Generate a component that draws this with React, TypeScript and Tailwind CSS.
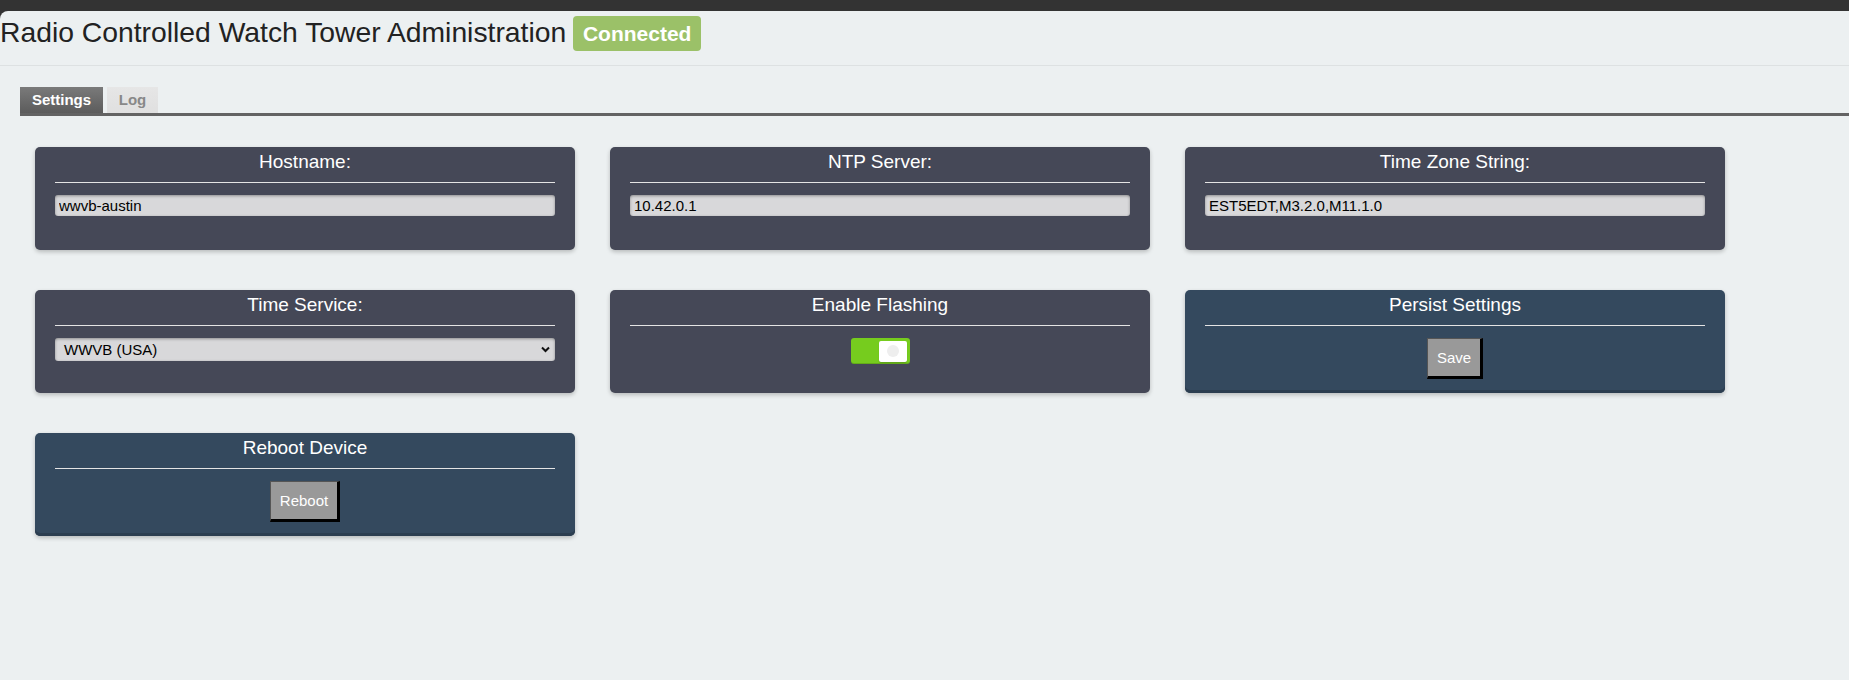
import React from "react";

const font = { fontFamily: '"Liberation Sans", Arial, Helvetica, sans-serif' };

function Card({
  title,
  blue,
  children,
}: {
  title: string;
  blue?: boolean;
  children: React.ReactNode;
}) {
  return (
    <div
      className={
        "h-[103px] w-[540px] rounded-[5px] px-[20px] pt-[4px] shadow-[0_2px_4px_rgba(0,0,0,0.22)] " +
        (blue
          ? "bg-[#34495e] shadow-[inset_0_-3px_0_#2c3e50,0_2px_4px_rgba(0,0,0,0.22)]"
          : "bg-[#454857]")
      }
    >
      <div className="text-center text-[19px] leading-[22px] text-white">{title}</div>
      <div className="mt-[9px] h-px bg-[#e4e4e4]" />
      <div className="mt-[12px]">{children}</div>
    </div>
  );
}

function TextInput({ value }: { value: string }) {
  return (
    <input
      readOnly
      value={value}
      className="block h-[21px] w-full rounded-[3px] bg-[#d8d8da] px-[4px] text-[15px] leading-[21px] text-black shadow-[inset_0_1px_3px_rgba(0,0,0,0.35)] outline-none"
      style={font}
    />
  );
}

function Button({ label }: { label: string }) {
  return (
    <div className="flex justify-center">
      <button
        className="border-l border-t border-l-[#555] border-t-[#555] border-r-[3px] border-b-[3px] border-r-black border-b-black bg-[#999999] px-[9px] py-[10px] text-[15px] leading-[17px] text-white"
        style={font}
      >
        {label}
      </button>
    </div>
  );
}

export default function App() {
  return (
    <div className="min-h-screen bg-[#333333] pt-[11px]" style={font}>
      <div className="min-h-[669px] rounded-tl-[8px] bg-[#ecf0f1]">
        <div className="flex h-[55px] items-start border-b border-[#dde1e2]">
          <h1 className="mt-[5px] text-[28.3px] leading-[32px] text-[#222]">
            Radio Controlled Watch Tower Administration
          </h1>
          <span className="ml-[7px] mt-[5px] flex h-[35px] w-[128px] items-center justify-center rounded-[4px] bg-[#9bc168] text-[21px] font-bold text-white">
            Connected
          </span>
        </div>

        <div className="mt-[21px] pl-[20px]">
          <div className="flex items-end gap-[4px]">
            <div className="flex h-[26px] w-[83px] items-center justify-center bg-gradient-to-b from-[#7a7a7a] to-[#5c5c5c] text-[15px] font-bold text-white">
              Settings
            </div>
            <div className="flex h-[26px] w-[51px] items-center justify-center bg-gradient-to-b from-[#e6e6e6] to-[#e0e0e0] text-[15px] font-bold text-[#888]">
              Log
            </div>
          </div>
          <div className="h-[3px] bg-[#636363]" />
        </div>

        <div className="grid grid-cols-[repeat(3,540px)] gap-x-[35px] gap-y-[40px] pl-[35px] pt-[31px]">
          <Card title="Hostname:">
            <TextInput value="wwvb-austin" />
          </Card>
          <Card title="NTP Server:">
            <TextInput value="10.42.0.1" />
          </Card>
          <Card title="Time Zone String:">
            <TextInput value="EST5EDT,M3.2.0,M11.1.0" />
          </Card>

          <Card title="Time Service:">
            <div className="relative h-[23px] rounded-[3px] bg-[#d8d8da] shadow-[inset_0_1px_3px_rgba(0,0,0,0.35)]">
              <div className="pl-[9px] text-[15px] leading-[23px] text-black">WWVB (USA)</div>
              <svg
                className="absolute right-[5px] top-[8px]"
                width="9"
                height="7"
                viewBox="0 0 9 7"
              >
                <path d="M1 1.5 L4.5 5 L8 1.5" fill="none" stroke="#111" strokeWidth="2" />
              </svg>
            </div>
          </Card>
          <Card title="Enable Flashing">
            <div className="flex justify-center">
              <div className="flex h-[26px] w-[59px] items-center justify-end rounded-[3px] bg-[#76cc1e] pr-[3px] shadow-[inset_0_-1px_0_rgba(0,0,0,0.15)]">
                <div className="flex h-[21px] w-[28px] items-center justify-center rounded-[2px] bg-white shadow-[0_1px_1px_rgba(0,0,0,0.2)]">
                  <div className="h-[12px] w-[12px] rounded-full bg-[#eeeeee]" />
                </div>
              </div>
            </div>
          </Card>
          <Card title="Persist Settings" blue>
            <Button label="Save" />
          </Card>

          <Card title="Reboot Device" blue>
            <Button label="Reboot" />
          </Card>
        </div>
      </div>
    </div>
  );
}
